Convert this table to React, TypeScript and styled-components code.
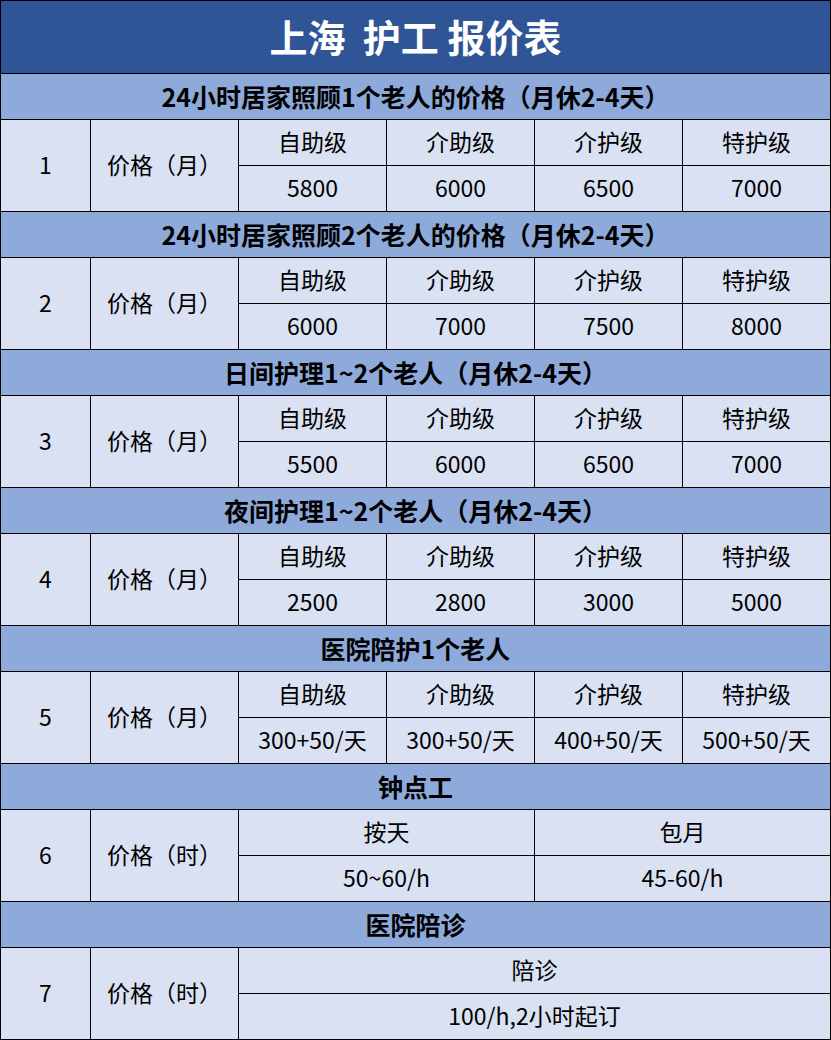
import React from 'react';
import styled, { createGlobalStyle } from 'styled-components';

type TBlock = {
  title: string;
  num: string;
  unit: string;
  top: string[];
  bottom: string[];
};

const LEVELS = ['自助级', '介助级', '介护级', '特护级'];

const blocks: TBlock[] = [
  { title: '24小时居家照顾1个老人的价格（月休2-4天）', num: '1', unit: '价格（月）', top: LEVELS, bottom: ['5800', '6000', '6500', '7000'] },
  { title: '24小时居家照顾2个老人的价格（月休2-4天）', num: '2', unit: '价格（月）', top: LEVELS, bottom: ['6000', '7000', '7500', '8000'] },
  { title: '日间护理1~2个老人（月休2-4天）', num: '3', unit: '价格（月）', top: LEVELS, bottom: ['5500', '6000', '6500', '7000'] },
  { title: '夜间护理1~2个老人（月休2-4天）', num: '4', unit: '价格（月）', top: LEVELS, bottom: ['2500', '2800', '3000', '5000'] },
  { title: '医院陪护1个老人', num: '5', unit: '价格（月）', top: LEVELS, bottom: ['300+50/天', '300+50/天', '400+50/天', '500+50/天'] },
  { title: '钟点工', num: '6', unit: '价格（时）', top: ['按天', '包月'], bottom: ['50~60/h', '45-60/h'] },
  { title: '医院陪诊', num: '7', unit: '价格（时）', top: ['陪诊'], bottom: ['100/h,2小时起订'] },
];

export default function App() {
  return (
    <>
      <GlobalStyle />
      <Sheet>
        <TitleCell>上海&nbsp;&nbsp;护工 报价表</TitleCell>
        {blocks.map((block) => (
          <React.Fragment key={block.num}>
            <SectionHeader>{block.title}</SectionHeader>
            <TallCell>{block.num}</TallCell>
            <TallCell>{block.unit}</TallCell>
            {block.top.map((text, i) => (
              <Cell key={`t${i}`} $span={4 / block.top.length}>{text}</Cell>
            ))}
            {block.bottom.map((text, i) => (
              <Cell key={`b${i}`} $span={4 / block.bottom.length}>{text}</Cell>
            ))}
          </React.Fragment>
        ))}
      </Sheet>
    </>
  );
}

const GlobalStyle = createGlobalStyle`
  body {
    margin: 0;
    background: #ffffff;
    font-family: "Noto Sans CJK SC", "Noto Sans", sans-serif;
  }
`;

const Sheet = styled.div`
  display: grid;
  grid-template-columns: 89px repeat(5, 147px);
  grid-template-rows: 72px;
  grid-auto-rows: 45px;
  gap: 1px;
  padding: 1px;
  width: 831px;
  box-sizing: border-box;
  background: #000000;
`;

const Cell = styled.div<{ $span?: number }>`
  grid-column: span ${(p) => p.$span || 1};
  display: flex;
  align-items: center;
  justify-content: center;
  padding-bottom: 3px;
  background: #d9e1f2;
  color: #000000;
  font-size: 23px;
  white-space: nowrap;
`;

const TallCell = styled(Cell)`
  grid-row: span 2;
`;

const SectionHeader = styled.div`
  grid-column: 1 / -1;
  display: flex;
  align-items: center;
  justify-content: center;
  padding-bottom: 2px;
  background: #8eaadb;
  color: #000000;
  font-size: 25px;
  font-weight: 700;
  white-space: nowrap;
`;

const TitleCell = styled.div`
  grid-column: 1 / -1;
  display: flex;
  align-items: center;
  justify-content: center;
  padding-bottom: 4px;
  background: #2f5597;
  color: #ffffff;
  font-size: 38px;
  font-weight: 700;
  white-space: pre;
`;
